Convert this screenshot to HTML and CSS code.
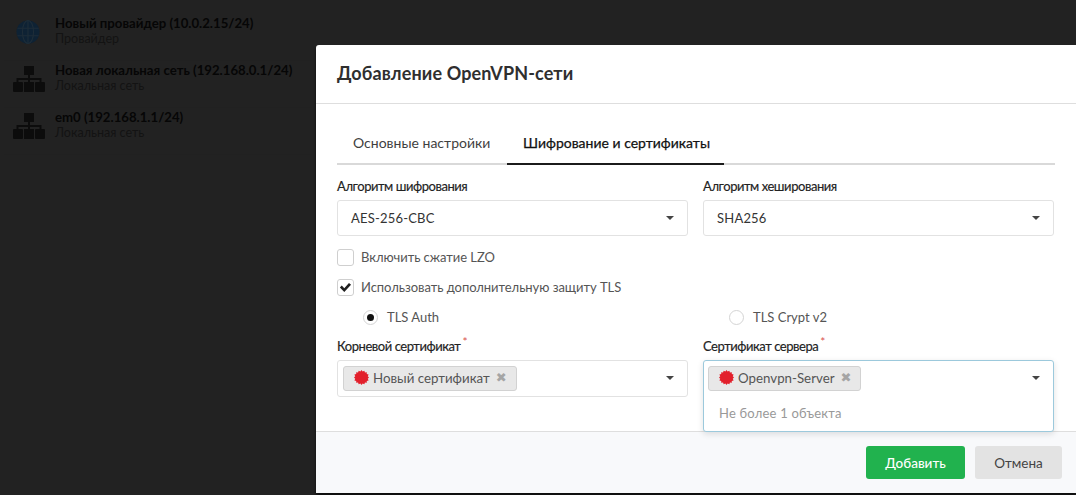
FILE: index.html
```html
<!DOCTYPE html>
<html lang="ru">
<head>
<meta charset="utf-8">
<title>Добавление OpenVPN-сети</title>
<link rel="stylesheet" href="styles.css">
</head>
<body>
<svg class="defs" width="0" height="0" aria-hidden="true">
  <defs>
    <symbol id="tree" viewBox="0 0 32 26">
      <path d="M11 0h10v9h-4v3h11.500v4H31a1 1 0 0 1 1 1v8a1 1 0 0 1-1 1h-8a1 1 0 0 1-1-1v-8a1 1 0 0 1 1-1h3.500v-2H17v2h4v10H11V16h4v-2H5.500v2H9a1 1 0 0 1 1 1v8a1 1 0 0 1-1 1H1a1 1 0 0 1-1-1v-8a1 1 0 0 1 1-1h2.500v-4H15V9h-4z"/>
    </symbol>
    <symbol id="cert" viewBox="0 0 16 16">
      <path d="M8 0l1.200 1.700L11 .7l.7 1.900 2-.3-.1 2 2 .5-.9 1.800L16 8l-1.300 1.400.9 1.800-2 .5.100 2-2-.3-.7 1.900-1.800-1L8 16l-1.200-1.700-1.800 1-.7-1.900-2 .3.100-2-2-.5.900-1.800L0 8l1.300-1.400L.4 4.800l2-.5-.1-2 2 .3.700-1.900 1.800 1z"/>
    </symbol>
  </defs>
</svg>
<ul class="net-list">
  <li class="net-row">
    <svg class="net-icon globe" viewBox="0 0 26 26" width="24" height="24"><circle cx="13" cy="13" r="12.500" fill="#0e2234"/><g fill="none" stroke="#1e2d38" stroke-width="1.200"><ellipse cx="13" cy="13" rx="6" ry="12.500"/><path d="M13 .5v25M1.500 9h23M1.500 17h23"/></g></svg>
    <div><div class="net-name">Новый провайдер (10.0.2.15/24)</div><div class="net-type">Провайдер</div></div>
  </li>
  <li class="net-row">
    <svg class="net-icon tree" width="32" height="26"><use href="#tree"/></svg>
    <div><div class="net-name">Новая локальная сеть (192.168.0.1/24)</div><div class="net-type">Локальная сеть</div></div>
  </li>
  <li class="net-row">
    <svg class="net-icon tree" width="32" height="26"><use href="#tree"/></svg>
    <div><div class="net-name">em0 (192.168.1.1/24)</div><div class="net-type">Локальная сеть</div></div>
  </li>
</ul>
<section class="modal">
  <header class="modal-head"><h2>Добавление OpenVPN-сети</h2></header>
  <div class="modal-body">
    <nav class="tabs">
      <a class="tab">Основные настройки</a>
      <a class="tab active">Шифрование и сертификаты</a>
    </nav>
    <div class="grid top">
      <div class="field">
        <label class="label">Алгоритм шифрования</label>
        <div class="select"><span>AES-256-CBC</span><i class="caret"></i></div>
      </div>
      <div class="field">
        <label class="label">Алгоритм хеширования</label>
        <div class="select"><span>SHA256</span><i class="caret"></i></div>
      </div>
    </div>
    <div class="check"><span class="box"></span>Включить сжатие LZO</div>
    <div class="check"><span class="box"><svg viewBox="0 0 16 16" width="16" height="16"><path d="M2 8.500l2-2 2.700 2.700 5-5.500 2.200 2-7.200 7.600z" fill="#1f1f1f"/></svg></span>Использовать дополнительную защиту TLS</div>
    <div class="grid radios">
      <div class="radio"><span class="dot on"></span>TLS Auth</div>
      <div class="radio"><span class="dot"></span>TLS Crypt v2</div>
    </div>
    <div class="grid certs">
      <div class="field">
        <label class="label">Корневой сертификат<sup>*</sup></label>
        <div class="select multi">
          <span class="chip"><svg class="cert" width="15" height="15" viewBox="0 0 16 16"><use href="#cert"/></svg>Новый сертификат<b class="x">✖</b></span>
          <i class="caret"></i>
        </div>
      </div>
      <div class="field">
        <label class="label">Сертификат сервера<sup>*</sup></label>
        <div class="select multi open">
          <span class="chip"><svg class="cert" width="15" height="15" viewBox="0 0 16 16"><use href="#cert"/></svg>Openvpn-Server<b class="x">✖</b></span>
          <i class="caret"></i>
          <div class="hint">Не более 1 объекта</div>
        </div>
      </div>
    </div>
  </div>
  <footer class="modal-foot">
    <button class="btn add">Добавить</button>
    <button class="btn cancel">Отмена</button>
  </footer>
</section>
</body>
</html>
```
FILE: styles.css
```css
* { box-sizing: border-box; }
html, body { height: 100%; }
body {
  margin: 0;
  overflow: hidden;
  position: relative;
  background: #222222;
  font-family: Lato, "Noto Sans", sans-serif;
  font-size: 13px;
}
.defs { position: absolute; }
.net-list { list-style: none; margin: 0; padding: 14px 0 0 4px; width: 312px; }
.net-row {
  display: flex;
  align-items: flex-start;
  gap: 11px;
  height: 47px;
  padding: 1px 0 0 9px;
  border-bottom: 1px solid #212121;
}
.net-icon { flex: none; margin-top: 4px; }
.net-icon.globe { margin: 5px 4px 0 3px; }
.tree { fill: #0c0c0c; margin-right: -1px; }
.net-name { font-size: 13.200px; line-height: 16px; color: #060606; font-weight: 700; white-space: nowrap; }
.net-type { font-size: 12.500px; line-height: 15px; color: #131313; }
.modal {
  position: absolute;
  left: 316px;
  top: 45px;
  width: 760px;
  height: 448px;
  background: #fff;
  border-radius: 3px 0 0 3px;
  display: flex;
  flex-direction: column;
  box-shadow: 0 3px 3px rgba(0,0,0,.6);
}
.modal-head {
  height: 59px;
  flex: none;
  border-bottom: 1px solid #dedede;
  padding: 0 21px 2px;
  display: flex;
  align-items: center;
}
.modal-head h2 { margin: 0; font-size: 18px; font-weight: 700; color: #2f2f2f; letter-spacing: .12px; }
.modal-body { height: 327px; flex: none; padding: 21px 21px 0; }
.tabs { display: flex; height: 40px; border-bottom: 2px solid #d9d9d9; }
.tab {
  height: 40px;
  padding: 9px 16px 0;
  font-size: 14px;
  line-height: 18px;
  color: #3f3f3f;
  white-space: nowrap;
}
.tab:first-child { width: 170px; }
.tab.active { color: #111; border-bottom: 2px solid #1b1b1b; width: 217px; -webkit-text-stroke: .25px #111; }
.grid { display: grid; grid-template-columns: 351px 351px; column-gap: 15px; }
.top { margin-top: 12px; }
.label { display: block; height: 23px; font-size: 13px; line-height: 18px; color: #222; letter-spacing: -.45px; -webkit-text-stroke: .15px #222; white-space: nowrap; }
.label sup { color: #d9534f; font-size: 12px; line-height: 0; margin-left: 2px; -webkit-text-stroke: 0; }
.select {
  position: relative;
  height: 36px;
  border: 1px solid #e2e2e2;
  border-radius: 3px;
  background: #fff;
  padding: 0 13px 1px;
  display: flex;
  align-items: center;
  font-size: 13px;
  color: #333;
  letter-spacing: .2px;
}
.caret {
  position: absolute;
  right: 13px;
  top: 15px;
  width: 0;
  height: 0;
  border: 4px solid transparent;
  border-top-color: #444;
  border-bottom: 0;
}
.check { display: flex; align-items: center; height: 18px; margin-top: 12px; font-size: 13px; color: #555; letter-spacing: -.05px; }
.box {
  width: 17px;
  height: 17px;
  margin-right: 7px;
  border: 1px solid #cfcfcf;
  border-radius: 3px;
  display: flex;
  align-items: center;
  justify-content: center;
  flex: none;
}
.radios { margin-top: 12px; height: 18px; }
.radio { display: flex; align-items: center; height: 18px; padding-left: 26px; color: #555; font-size: 13px; }
.dot { width: 15px; height: 15px; border: 1px solid #d4d4d4; border-radius: 50%; margin-right: 9px; flex: none; position: relative; }
.dot.on::after { content: ""; position: absolute; left: 3px; top: 3px; width: 7px; height: 7px; border-radius: 50%; background: #111; }
.certs { margin-top: 11px; }
.multi { height: 37px; padding: 0 5px; align-items: flex-start; flex-wrap: wrap; }
.chip {
  display: inline-flex;
  align-items: center;
  height: 25px;
  margin-top: 5px;
  padding: 0 9px 2px 10px;
  background: #e8e8e8;
  border: 1px solid #d2d2d2;
  border-radius: 3px;
  font-size: 13.300px;
  color: #555;
  letter-spacing: 0;
}
.cert { fill: #e2202c; margin-right: 4px; }
.x { margin-left: 6px; font-size: 13px; font-weight: 400; color: #a5a5a5; font-family: "DejaVu Sans", sans-serif; }
.open {
  height: 72px;
  padding-left: 4px;
  border-color: #9cc9dc;
  box-shadow: 0 2px 6px rgba(0,0,0,.12);
  z-index: 2;
}
.hint { width: 100%; padding: 4px 11px 0; font-size: 13px; color: #999; }
.modal-foot {
  flex: 1;
  background: #f8f9fb;
  border-top: 1px solid #dedede;
  display: flex;
  justify-content: flex-end;
  align-items: flex-start;
  gap: 10px;
  padding: 14px 14px 0 0;
}
.btn {
  height: 33px;
  border: 0;
  border-radius: 3px;
  font-family: inherit;
  font-size: 13.500px;
}
.add { width: 99px; background: #21b24e; color: #fff; font-weight: 500; }
.cancel { width: 87px; background: #e3e3e3; color: #444; }
```
